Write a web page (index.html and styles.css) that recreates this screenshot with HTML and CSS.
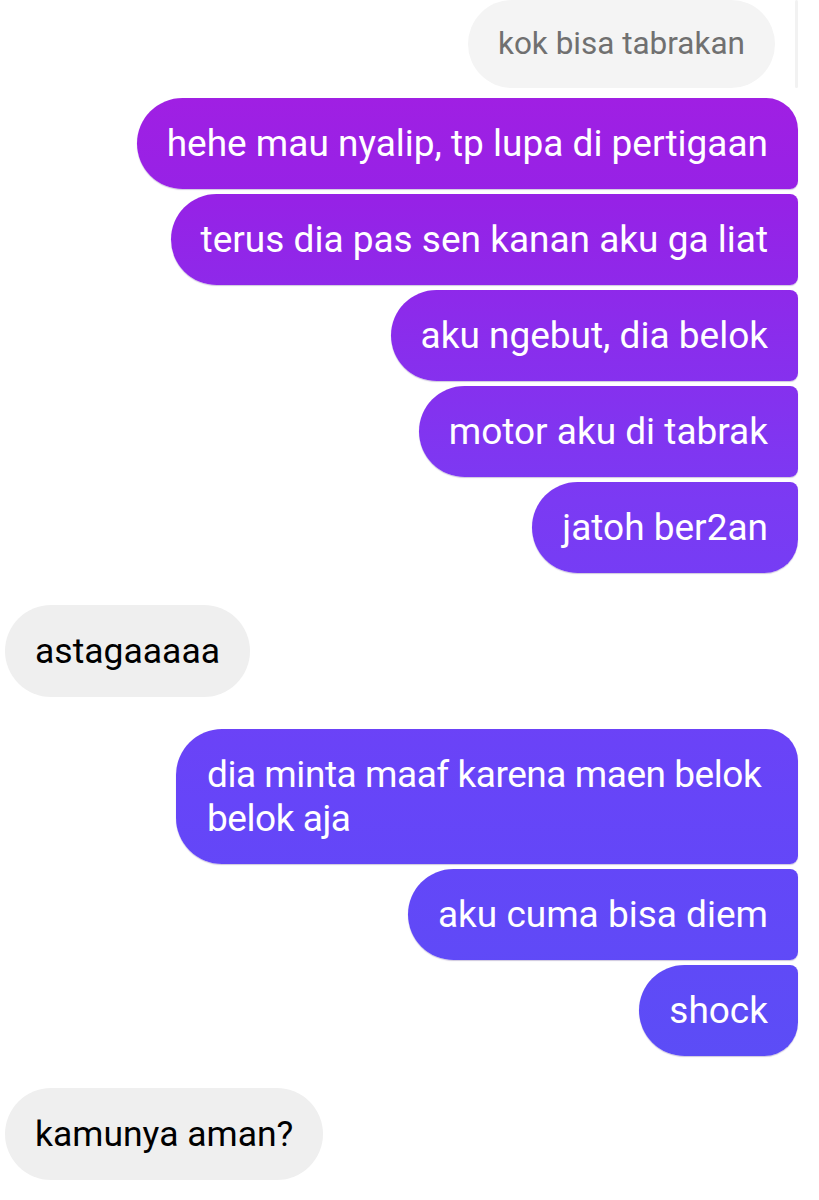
FILE: index.html
```html
<!DOCTYPE html>
<html>
<head>
<meta charset="utf-8">
<link rel="stylesheet" href="styles.css">
</head>
<body>
<div class="chat">
  <div class="reply-row">
    <div class="reply">kok bisa tabrakan</div>
    <div class="reply-bar"></div>
  </div>
  <div class="group out">
    <div class="msg first">hehe mau nyalip, tp lupa di pertigaan</div>
    <div class="msg">terus dia pas sen kanan aku ga liat</div>
    <div class="msg">aku ngebut, dia belok</div>
    <div class="msg">motor aku di tabrak</div>
    <div class="msg last">jatoh ber2an</div>
  </div>
  <div class="group in">
    <div class="msg">astagaaaaa</div>
  </div>
  <div class="group out">
    <div class="msg first wide">dia minta maaf karena maen belok<br>belok aja</div>
    <div class="msg">aku cuma bisa diem</div>
    <div class="msg last">shock</div>
  </div>
  <div class="group in">
    <div class="msg">kamunya aman?</div>
  </div>
</div>
</body>
</html>
```
FILE: styles.css
```css
html, body {
  margin: 0;
  padding: 0;
  background: #ffffff;
}
.chat {
  display: flex;
  flex-direction: column;
  padding: 0 21px 0 5px;
  font-family: Roboto, "Liberation Sans", sans-serif;
}
.reply-row {
  display: flex;
  justify-content: flex-end;
  align-items: stretch;
  gap: 20px;
  margin-bottom: 10px;
}
.reply {
  background: #f4f4f4;
  color: #707070;
  font-size: 31.5px;
  line-height: 44px;
  padding: 22px 30px;
  border-radius: 44px;
}
.reply-bar {
  width: 3px;
  background: #f2f2f2;
  border-radius: 2px;
}
.group {
  display: flex;
  flex-direction: column;
  gap: 5px;
  margin-bottom: 32px;
}
.group.out {
  align-items: flex-end;
}
.group.in {
  align-items: flex-start;
}
.msg {
  box-sizing: border-box;
  font-size: 37px;
  line-height: 44px;
  padding: 24px 30px 23px;
  border-radius: 46px;
}
.out .msg {
  color: #ffffff;
  background: linear-gradient(to bottom, #a91de0 0px, #9622e6 200px, #7b3af3 500px, #6645f8 800px, #5a4ef6 1100px, #5650f4 1200px) fixed;
  border-radius: 46px 8px 8px 46px;
  box-shadow: 0 1px 1px rgba(60, 30, 120, 0.25);
}
.out .msg.first {
  border-top-right-radius: 32px;
}
.out .msg.last {
  border-bottom-right-radius: 34px;
}
.out .msg.wide {
  width: 622px;
  white-space: nowrap;
  letter-spacing: -0.45px;
  padding-left: 31px;
}
.in .msg {
  font-size: 35.5px;
  padding: 24px 30px;
  background: #efefef;
  color: #000000;
}
```
